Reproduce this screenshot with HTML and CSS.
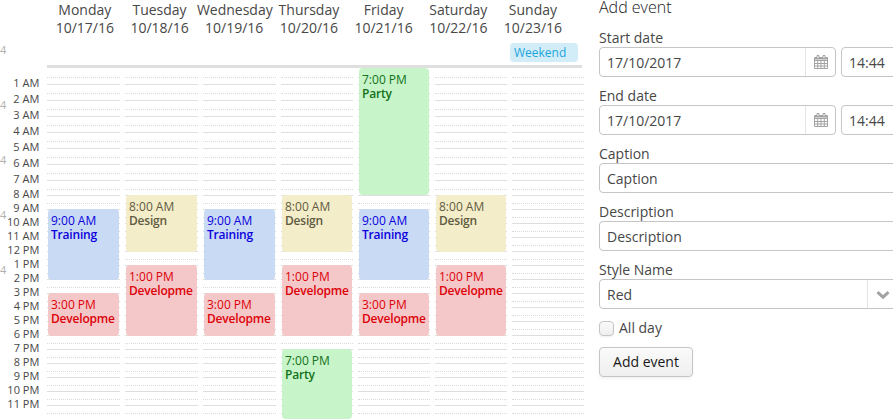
FILE: index.html
```
<!DOCTYPE html>
<html lang="en">
<head>
<meta charset="utf-8">
<title>Calendar</title>
<link rel="stylesheet" href="styles.css">
</head>
<body>
<main class="app">
  <div class="weeks"><span>4</span><span>4</span><span>4</span><span>4</span><span>4</span></div>
  <div class="hours" id="hours"></div>
  <section class="calendar">
    <header class="day-names">
      <div>Monday<br>10/17/16</div>
      <div>Tuesday<br>10/18/16</div>
      <div>Wednesday<br>10/19/16</div>
      <div>Thursday<br>10/20/16</div>
      <div>Friday<br>10/21/16</div>
      <div>Saturday<br>10/22/16</div>
      <div>Sunday<br>10/23/16</div>
    </header>
    <div class="all-day"><div class="all-day-event">Weekend</div></div>
    <div class="days" id="days"></div>
  </section>
  <form class="panel">
    <h2>Add event</h2>
    <label>Start date</label>
    <div class="date-row">
      <div class="field date"><span>17/10/2017</span><i class="cal-button"></i></div>
      <div class="field time">14:44</div>
    </div>
    <label>End date</label>
    <div class="date-row">
      <div class="field date"><span>17/10/2017</span><i class="cal-button"></i></div>
      <div class="field time">14:44</div>
    </div>
    <label>Caption</label>
    <div class="field">Caption</div>
    <label>Description</label>
    <div class="field">Description</div>
    <label>Style Name</label>
    <div class="field combo"><span>Red</span><i class="combo-button"><svg width="14" height="10" viewBox="0 0 14 10"><path d="M1.500 2.200 7 7.200 12.500 2.200" fill="none" stroke="#a3a3a3" stroke-width="3"/></svg></i></div>
    <div class="check"><i></i><span>All day</span></div>
    <button type="button">Add event</button>
  </form>
</main>
<script src="calendar.js"></script>
</body>
</html>
```
FILE: styles.css
```
* { box-sizing: border-box; }
body {
  margin: 0;
  background: #fff;
  color: #474747;
  font: 14px/18px "Open Sans", sans-serif;
  overflow: hidden;
}
.app { display: flex; width: 893px; height: 420px; overflow: hidden; }
.weeks {
  display: flex;
  flex-direction: column;
  flex: none;
  width: 7px;
  padding-top: 22px;
  font-size: 11px;
  line-height: 55px;
  color: #b0b0b0;
}
.hours, .day {
  display: grid;
  grid-template-rows: repeat(7, 16px) 15px repeat(16, 14px);
}
.hours {
  flex: none;
  width: 32px;
  margin-right: 8px;
  padding-top: 68px;
  font-size: 11px;
  line-height: 14px;
  text-align: right;
  white-space: nowrap;
}
.hours span { margin-top: -8px; height: 14px; }
.calendar { flex: none; width: 537px; }
.day-names {
  display: grid;
  grid-template-columns: repeat(7, 74.7px);
  height: 40px;
  padding: 1px 0 0 .5px;
  font-size: 14px;
  text-align: center;
}
.all-day {
  display: flex;
  justify-content: flex-end;
  width: 535px;
  height: 28px;
  padding: 3px 4px 0 0;
  border-bottom: 3px solid #dfdfdf;
}
.all-day-event {
  width: 68px;
  height: 19px;
  padding-left: 4px;
  border-radius: 4px;
  background: #d3edf8;
  color: #1ba6dd;
  font-size: 12px;
  line-height: 19px;
}
.days {
  display: grid;
  grid-template-columns: repeat(3, 73px) repeat(4, 72px);
  gap: 5px;
}
.slot {
  grid-column: 1;
  display: flex;
  flex-direction: column;
  border-top: 1px solid #dfdfdf;
}
.slot:first-child { border-top-color: transparent; }
.slot::before {
  content: "";
  height: calc(50% + .5px);
  border-bottom: 1px dotted #dadada;
}
.event {
  z-index: 1;
  grid-column: 1;
  margin: 0 1px -1px;
  padding: 5px 0 0 3px;
  border-radius: 4px;
  font-size: 12px;
  line-height: 14px;
  white-space: nowrap;
}
.event b { display: block; font-weight: 600; letter-spacing: -.2px; }
.blue { background: #c8daf4; color: #0b00dc; }
.yellow { background: #f4edc9; color: #5f5b41; }
.red { background: #f4c8c9; color: #dc0008; }
.green { background: #c8f4c9; color: #11721a; }
.clipped { margin-bottom: 0; }
.panel { flex: none; width: 330px; margin-left: 15px; }
.panel h2 {
  margin: -3px 0 12px;
  height: 20px;
  font-size: 16px;
  font-weight: 300;
  line-height: 20px;
  color: #191919;
}
.panel label { display: block; height: 18px; line-height: 18px; }
.field {
  display: flex;
  justify-content: space-between;
  height: 30px;
  margin-bottom: 10px;
  padding-left: 7px;
  border: 1px solid #c5c5c5;
  border-radius: 4px;
  line-height: 30px;
}
.date-row { display: flex; gap: 5px; }
.date { width: 237px; }
.time { width: 88px; line-height: 30px; }
.cal-button {
  display: grid;
  place-items: center;
  width: 30px;
  border-left: 1px solid #e4e4e4;
}
.combo-button {
  width: 61px;
  padding-left: 8px;
  border-left: 1px solid #e4e4e4;
}
.check { display: flex; height: 18px; gap: 5px; align-items: center; }
.check i {
  width: 15px;
  height: 15px;
  border: 1px solid #c5c5c5;
  border-radius: 4px;
  background: linear-gradient(#fafafa, #efefef);
  box-shadow: 0 1px 2px rgba(0, 0, 0, .07);
}
.panel button {
  display: block;
  width: 94px;
  height: 30px;
  margin-top: 10px;
  padding: 0;
  border: 1px solid #c5c5c5;
  border-radius: 4px;
  background: linear-gradient(#fafafa, #efefef);
  box-shadow: 0 2px 3px rgba(0, 0, 0, .05);
  color: #191919;
  font: 14px/28px "Open Sans", sans-serif;
}
```
FILE: calendar.js
```
const hours = document.getElementById("hours");
for (let h = 0; h < 24; h++) {
  const label = document.createElement("span");
  if (h) label.textContent = (h % 12 || 12) + (h < 12 ? " AM" : " PM");
  hours.append(label);
}

// [start hour, end hour, time label, caption, style]
const training = [9, 14, "9:00 AM", "Training", "blue"];
const design = [8, 12, "8:00 AM", "Design", "yellow"];
const development = [13, 18, "1:00 PM", "Developme", "red"];
const lateDevelopment = [15, 18, "3:00 PM", "Developme", "red"];
const week = [
  [training, lateDevelopment],
  [design, development],
  [training, lateDevelopment],
  [design, development, [19, 24, "7:00 PM", "Party", "green clipped"]],
  [[0, 8, "7:00 PM", "Party", "green clipped"], training, lateDevelopment],
  [design, development],
  []
];
const days = document.getElementById("days");
for (const events of week) {
  const day = document.createElement("div");
  day.className = "day";
  for (let h = 0; h < 24; h++) {
    const slot = document.createElement("div");
    slot.className = "slot";
    slot.style.gridRow = h + 1;
    day.append(slot);
  }
  for (const [from, to, time, caption, style] of events) {
    const event = document.createElement("div");
    event.className = "event " + style;
    event.style.gridRow = `${from + 1} / ${to + 1}`;
    event.innerHTML = `${time}<b>${caption}</b>`;
    day.append(event);
  }
  days.append(day);
}

for (const button of document.querySelectorAll(".cal-button")) {
  button.innerHTML = `<svg width="14" height="14" viewBox="0 0 14 14" fill="none" stroke="#a3a3a3">
    <path d="M.5 2.5h13v11H.5zM.5 5.5h13M.5 8.5h13M.5 11h13M3.7 5v8.500M7 5v8.500M10.300 5v8.500"/>
    <path d="M1 3.500h12" stroke-width="2"/>
    <path d="M3 .5h2v3H3zM9 .5h2v3H9z" fill="#fff"/></svg>`;
}
```
